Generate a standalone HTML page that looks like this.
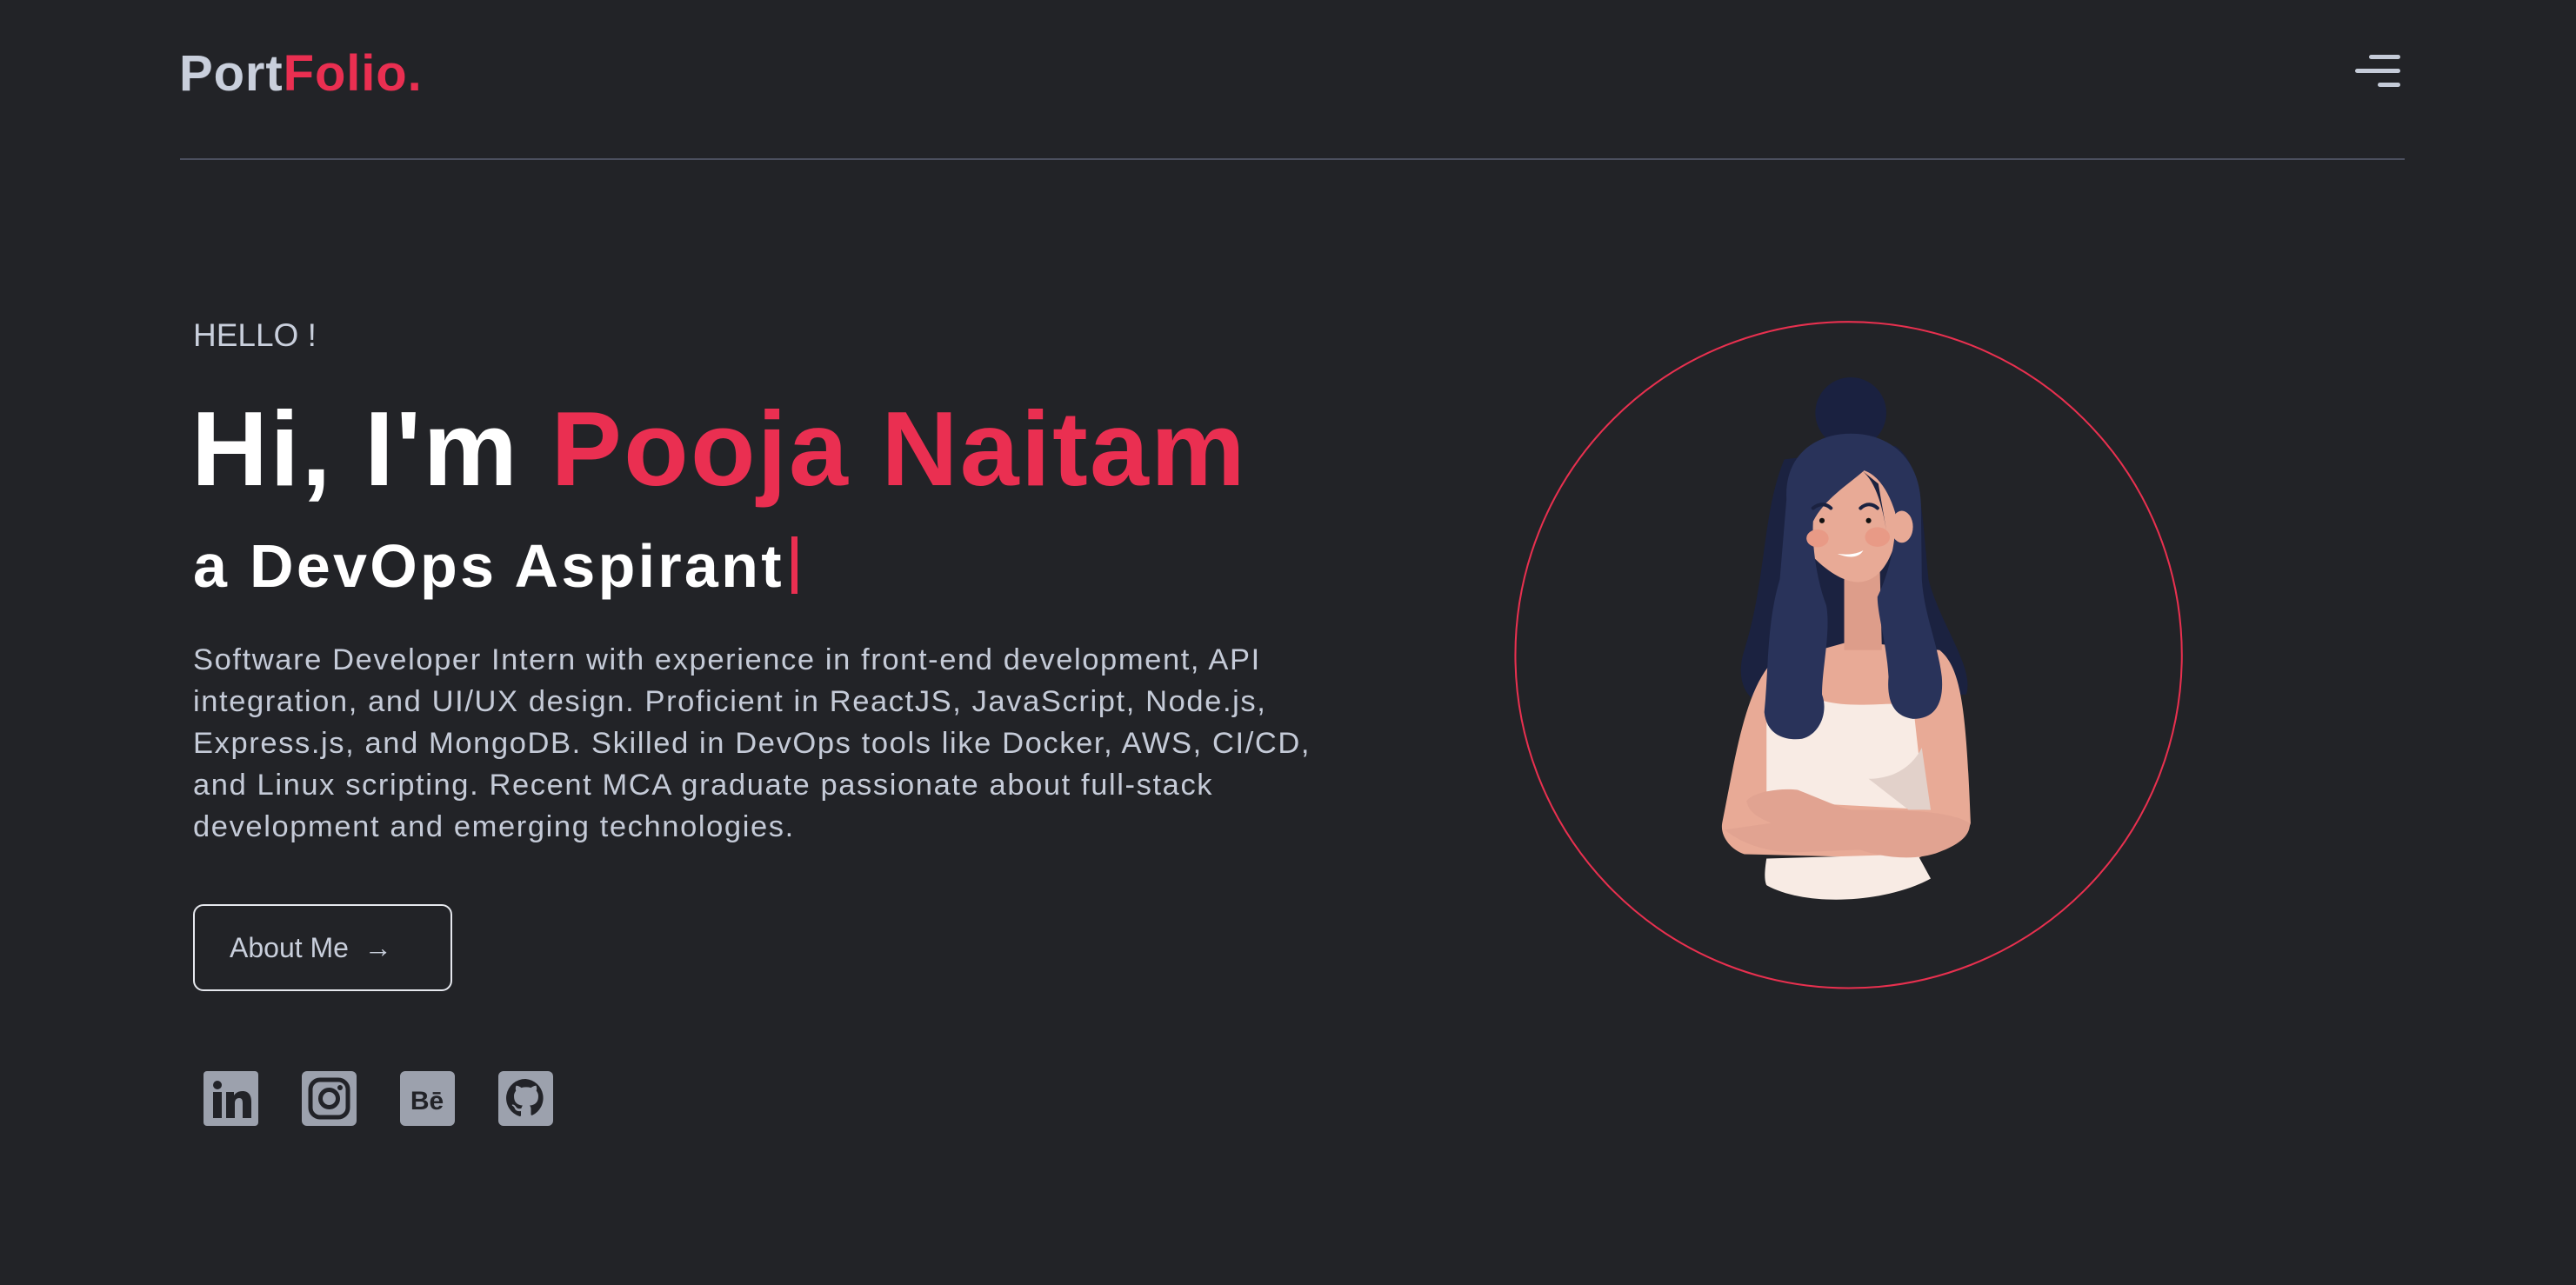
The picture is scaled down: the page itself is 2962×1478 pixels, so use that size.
<!DOCTYPE html>
<html><head><meta charset="utf-8"><style>
*{margin:0;padding:0;box-sizing:border-box}
body{width:2962px;height:1478px;background:#222327;font-family:"Liberation Sans",sans-serif;position:relative;overflow:hidden}
.a{position:absolute;white-space:nowrap}
</style></head><body>
<div class="a" style="left:206px;top:50px;font-size:58px;font-weight:700;letter-spacing:0.9px;line-height:70px;color:#c9cfdc">Port<span style="color:#ea2f51">Folio.</span></div>
<div class="a" style="left:2724px;top:63px;width:36px;height:5px;border-radius:3px;background:#c5cbd8"></div>
<div class="a" style="left:2708px;top:79px;width:52px;height:5px;border-radius:3px;background:#c5cbd8"></div>
<div class="a" style="left:2734px;top:95px;width:26px;height:5px;border-radius:3px;background:#c5cbd8"></div>
<div class="a" style="left:207px;top:182px;width:2558px;height:2px;background:#4b4f5e"></div>
<div class="a" style="left:222px;top:362px;font-size:37px;line-height:48px;color:#c9cfdc">HELLO !</div>
<div class="a" style="left:220px;top:446px;font-size:122px;font-weight:700;line-height:140px;color:#fff;letter-spacing:2.3px">Hi, I'm <span style="color:#ea2f51">Pooja Naitam</span></div>
<div class="a" style="left:222px;top:606px;font-size:70px;font-weight:700;line-height:90px;color:#fff;letter-spacing:3.3px">a DevOps Aspirant<span style="display:inline-block;width:7px;height:66px;background:#ea2f51;margin-left:8px;vertical-align:-8px"></span></div>
<div class="a" style="left:222px;top:735px;font-size:34.5px;line-height:48px;color:#c5cbd8;letter-spacing:1.6px">Software Developer Intern with experience in front-end development, API<br>integration, and UI/UX design. Proficient in ReactJS, JavaScript, Node.js,<br>Express.js, and MongoDB. Skilled in DevOps tools like Docker, AWS, CI/CD,<br>and Linux scripting. Recent MCA graduate passionate about full-stack<br>development and emerging technologies.</div>
<div class="a" style="left:222px;top:1040px;width:298px;height:100px;border:2px solid #e6e8ee;border-radius:12px;color:#c9cfdc;font-size:32px;line-height:96px;padding-left:40px">About Me &nbsp;→</div>
<svg class="a" style="left:234px;top:1232px" width="63" height="63" viewBox="0 0 63 63"><rect width="63" height="63" rx="4" fill="#9ca1ad"/><circle cx="16" cy="16" r="5" fill="#222328"/><rect x="11" y="24" width="10" height="30" fill="#222328"/><path d="M26 24h9v4c2-3 5-5 10-5 7 0 10 5 10 12v19h-10v-17c0-4-1-6-4-6s-5 2-5 6v17h-10z" fill="#222328"/></svg>
<svg class="a" style="left:347px;top:1232px" width="63" height="63" viewBox="0 0 63 63"><rect width="63" height="63" rx="6" fill="#9ca1ad"/><rect x="10" y="10" width="43" height="43" rx="11" fill="none" stroke="#222328" stroke-width="5"/><circle cx="31.5" cy="31.5" r="10" fill="none" stroke="#222328" stroke-width="5"/><circle cx="44" cy="19" r="3" fill="#222328"/></svg>
<svg class="a" style="left:460px;top:1232px" width="63" height="63" viewBox="0 0 63 63"><rect width="63" height="63" rx="6" fill="#9ca1ad"/><text x="31" y="44" text-anchor="middle" font-family="Liberation Sans" font-weight="700" font-size="30" fill="#222328">Bē</text></svg>
<svg class="a" style="left:573px;top:1232px" width="63" height="63" viewBox="0 0 63 63"><rect width="63" height="63" rx="6" fill="#9ca1ad"/><path d="M31.5 9a22 22 0 0 0-7 43c1 0 1.5-.5 1.5-1v-5c-6 1-7-3-7-3-1-2.5-2.5-3-2.5-3-2-1.5.2-1.5.2-1.5 2.2.2 3.4 2.3 3.4 2.3 2 3.4 5.2 2.4 6.5 1.8.2-1.4.8-2.4 1.4-3-5-.6-10-2.5-10-11 0-2.4.9-4.4 2.3-6-.2-.6-1-2.8.2-5.8 0 0 1.9-.6 6 2.3a21 21 0 0 1 11 0c4.2-2.9 6-2.3 6-2.3 1.2 3 .4 5.2.2 5.8 1.4 1.6 2.3 3.6 2.3 6 0 8.5-5 10.4-10 11 .8.7 1.5 2 1.5 4v6.2c0 .6.4 1.1 1.5 1A22 22 0 0 0 31.5 9z" fill="#222328"/></svg>
<svg class="a" style="left:1720px;top:360px" width="800" height="800" viewBox="0 0 1568 1568">
<circle cx="795" cy="771" r="751" fill="none" stroke="#e8304f" stroke-width="4"/>
<path d="M650 330C600 450 610 600 560 760C540 820 560 870 600 880L1060 860C1080 800 1000 700 975 600C960 450 960 340 900 300Z" fill="#1b2240"/>
<circle cx="800" cy="225" r="80" fill="#1a2140"/>
<path d="M510 1150C540 1000 560 860 620 790L800 740L1000 760C1050 800 1060 900 1070 1150C1060 1190 1010 1200 950 1230L560 1220C530 1210 505 1180 510 1150Z" fill="#e8aa96"/>
<path d="M785 560L865 560L870 760L785 760Z" fill="#dd9d8a"/>
<path d="M610 880C660 890 720 880 740 875C800 890 860 880 940 880L960 1060L980 1120L610 1100Z" fill="#f8ebe4"/>
<path d="M840 1050C900 1050 940 1020 960 980L980 1120L930 1120Z" fill="#e2d1ca"/>
<path d="M610 1230C605 1260 605 1280 610 1290C700 1340 880 1330 980 1275L950 1220Z" fill="#f8ebe4"/>
<path d="M515 1165C560 1200 620 1220 700 1215L820 1210C880 1230 950 1235 1000 1215C1040 1200 1070 1180 1068 1150C1020 1120 900 1120 800 1120C760 1110 720 1090 680 1075C640 1070 580 1080 565 1100C570 1130 600 1140 620 1150Z" fill="#e1a391"/>
<path d="M695 400C685 460 695 520 715 550C760 595 800 612 830 605C875 595 895 540 905 500C915 450 905 380 860 350C800 330 725 350 695 400Z" fill="#e8aa96"/>
<path d="M655 420C650 320 720 272 800 272C890 272 955 330 958 430L960 600C965 680 995 740 1005 820C1010 880 990 915 940 915C900 910 880 880 885 820C880 740 860 680 860 640C880 600 905 520 900 450C885 400 860 365 830 355C790 390 740 420 715 470C712 520 722 600 745 660C755 720 735 800 735 860C750 900 730 950 690 960C650 965 610 950 605 900C615 800 610 700 640 600Z" fill="#29335a"/>
<path d="M825 355C855 380 870 430 880 490L862 385Z" fill="#1b2240"/>
<ellipse cx="915" cy="482" rx="25" ry="36" fill="#e8aa96"/>
<ellipse cx="725" cy="508" rx="25" ry="20" fill="#e89a86"/>
<ellipse cx="860" cy="505" rx="28" ry="22" fill="#e89a86"/>
<path d="M715 440C730 428 745 430 755 440" stroke="#1b2240" stroke-width="8" fill="none" stroke-linecap="round"/>
<path d="M822 440C835 428 850 430 860 440" stroke="#1b2240" stroke-width="8" fill="none" stroke-linecap="round"/>
<circle cx="735" cy="468" r="6" fill="#111"/><circle cx="840" cy="468" r="6" fill="#111"/>
<path d="M770 543C800 555 820 550 828 535C810 545 790 545 770 543Z" fill="#fff"/>
</svg>
</body></html>
